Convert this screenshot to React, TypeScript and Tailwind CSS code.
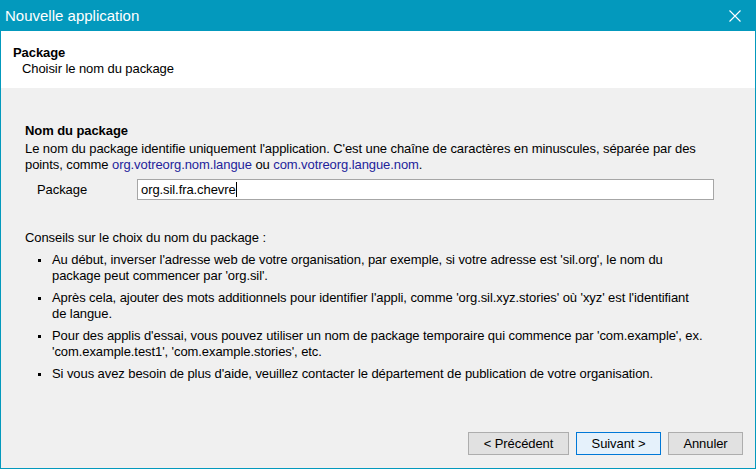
const link = "text-[#23239b]";

function Bullet({ lines }: { lines: string[] }) {
	return (
		<li className="flex">
			<span className="w-[27px] shrink-0 flex justify-end pr-[11px] pt-[7px]">
				<span className="block w-[3px] h-[3px] bg-black" />
			</span>
			<span>
				{lines.map((l) => (
					<span key={l} className="block whitespace-nowrap">
						{l}
					</span>
				))}
			</span>
		</li>
	);
}

function WinButton({
	label,
	width,
	primary,
}: {
	label: string;
	width: string;
	primary?: boolean;
}) {
	return (
		<button
			className={
				primary
					? `${width} h-[23px] border border-[#0078d7] bg-[#e5f1fb] text-black`
					: `${width} h-[23px] border border-[#adadad] bg-[#e1e1e1] text-black`
			}
		>
			{label}
		</button>
	);
}

export default function App() {
	return (
		<div
			className="w-[756px] h-[469px] border border-[#0399bd] flex flex-col bg-[#f0f0f0] text-black text-[13px] leading-[16px] tracking-[-0.08px]"
			style={{ fontFamily: '"Liberation Sans", Arial, sans-serif' }}
		>
			{/* title bar */}
			<div className="h-[30px] bg-[#0399bd] flex items-center justify-between pl-[4px] pr-[14px] shrink-0">
				<span className="text-white text-[15px] tracking-normal">Nouvelle application</span>
				<svg width="12" height="12" viewBox="0 0 12 12" className="text-white">
					<path d="M0.5 0.5 L11.5 11.5 M11.5 0.5 L0.5 11.5" stroke="currentColor" strokeWidth="1.1" />
				</svg>
			</div>

			{/* header */}
			<div className="h-[57px] bg-white shrink-0 pl-[12px] pt-[14px]">
				<div className="font-bold">Package</div>
				<div className="pl-[9px]">Choisir le nom du package</div>
			</div>

			{/* body */}
			<div className="flex-1 flex flex-col pl-[24px] pr-[40px] pt-[35px]">
				<div className="font-bold mb-[2px]">Nom du package</div>
				<div className="whitespace-nowrap">
					Le nom du package identifie uniquement l'application. C'est une chaîne de caractères en
					minuscules, séparée par des
				</div>
				<div className="whitespace-nowrap">
					points, comme <span className={link}>org.votreorg.nom.langue</span> ou{" "}
					<span className={link}>com.votreorg.langue.nom</span>.
				</div>

				<div className="flex items-center mt-[6px]">
					<span className="w-[112px] pl-[12px]">Package</span>
					<div className="w-[577px] h-[21px] border border-[#a6a6a6] bg-white flex items-center pl-[3px]">
						<span>org.sil.fra.chevre</span>
						<span className="w-px h-[15px] bg-black" />
					</div>
				</div>

				<div className="mt-[30px]">Conseils sur le choix du nom du package :</div>
				<ul className="mt-[6px] flex flex-col gap-[6px]">
					<Bullet
						lines={[
							"Au début, inverser l'adresse web de votre organisation, par exemple, si votre adresse est 'sil.org', le nom du",
							"package peut commencer par 'org.sil'.",
						]}
					/>
					<Bullet
						lines={[
							"Après cela, ajouter des mots additionnels pour identifier l'appli, comme 'org.sil.xyz.stories' où 'xyz' est l'identifiant",
							"de langue.",
						]}
					/>
					<Bullet
						lines={[
							"Pour des applis d'essai, vous pouvez utiliser un nom de package temporaire qui commence par 'com.example', ex.",
							"'com.example.test1', 'com.example.stories', etc.",
						]}
					/>
					<Bullet
						lines={[
							"Si vous avez besoin de plus d'aide, veuillez contacter le département de publication de votre organisation.",
						]}
					/>
				</ul>

				<div className="mt-auto mb-[13px] flex justify-end gap-[7px] -mr-[28px]">
					<WinButton label="< Précédent" width="w-[101px]" />
					<WinButton label="Suivant >" width="w-[85px]" primary />
					<WinButton label="Annuler" width="w-[75px]" />
				</div>
			</div>
		</div>
	);
}
